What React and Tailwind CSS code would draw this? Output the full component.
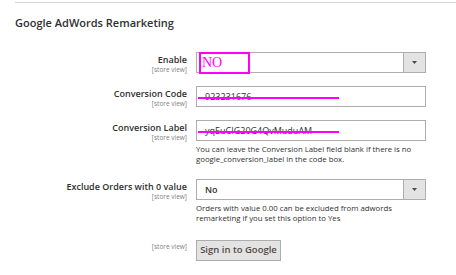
import React from "react";

const StoreView = () => (
  <div className="text-[6.5px] leading-[8px] text-[#808080]">[store view]</div>
);

const Row = ({ label, children, className = "" }) => (
  <div className={`flex ${className}`}>
    <div className="w-[187px] shrink-0 text-right pt-[2px]">
      {label && (
        <div className="text-[9px] leading-[12px] font-semibold text-[#303030]">
          {label}
        </div>
      )}
      <StoreView />
    </div>
    <div className="ml-[9px] w-[230px]">{children}</div>
  </div>
);

const Arrow = () => (
  <div className="w-[22px] h-full bg-[#e3e3e3] border-l border-[#adadad] flex items-center justify-center">
    <svg width="5" height="3" viewBox="0 0 5 3">
      <path d="M0 0h5L2.5 3z" fill="#514943" />
    </svg>
  </div>
);

export default function App() {
  return (
    <div
      className="w-[456px] h-[275px] bg-white overflow-hidden relative"
      style={{ fontFamily: '"Open Sans", "Noto Sans", sans-serif' }}
    >
      <div className="ml-[15px] mt-[2px] border-t border-[#d6d6d6]" />
      <div className="ml-[15px] mt-[13px] text-[11px] leading-[14px] font-semibold text-[#303030]">
        Google AdWords Remarketing
      </div>

      <Row label="Enable" className="mt-[22px]">
        <div className="relative h-[21px] border border-[#adadad] flex">
          <div className="flex-1" />
          <Arrow />
          <div
            className="absolute left-[2px] top-[-1px] w-[51px] h-[22px] border-2 border-[#ff00ff] text-[#ff00ff] text-[14px] leading-[18px] pl-[1px]"
            style={{ fontFamily: '"Liberation Serif", serif' }}
          >
            NO
          </div>
        </div>
      </Row>

      <Row label="Conversion Code" className="mt-[12px]">
        <div className="relative h-[21px] border border-[#adadad] px-[8px] text-[9px] leading-[19px] text-[#303030]">
          923231676
          <div className="absolute left-[1px] top-[10px] w-[141px] h-[2px] bg-[#ff00ff]" />
        </div>
      </Row>

      <Row label="Conversion Label" className="mt-[12px]">
        <div className="relative h-[21px] border border-[#adadad] px-[8px] text-[9px] leading-[19px] text-[#303030]">
          yqEuCIG20G4QvMuduAM
          <div className="absolute left-[1px] top-[10px] w-[141px] h-[2px] bg-[#ff00ff]" />
        </div>
        <div className="mt-[3px] text-[7.8px] leading-[10px] text-[#303030]">
          You can leave the Conversion Label field blank if there is no
          google_conversion_label in the code box.
        </div>
      </Row>

      <Row label="Exclude Orders with 0 value" className="mt-[15px]">
        <div className="h-[21px] border border-[#adadad] flex">
          <div className="flex-1 px-[8px] text-[9px] leading-[19px] font-semibold text-[#303030]">
            No
          </div>
          <Arrow />
        </div>
        <div className="mt-[3px] text-[7.8px] leading-[10px] text-[#303030]">
          Orders with value 0.00 can be excluded from adwords remarketing if
          you set this option to Yes
        </div>
      </Row>

      <div className="flex mt-[12px]">
        <div className="w-[187px] shrink-0 text-right pt-[8px]">
          <StoreView />
        </div>
        <div className="ml-[9px]">
          <button className="w-[85px] h-[21px] bg-[#e3e3e3] border border-[#adadad] text-[9.5px] font-semibold text-[#514943]">
            Sign in to Google
          </button>
        </div>
      </div>
    </div>
  );
}
